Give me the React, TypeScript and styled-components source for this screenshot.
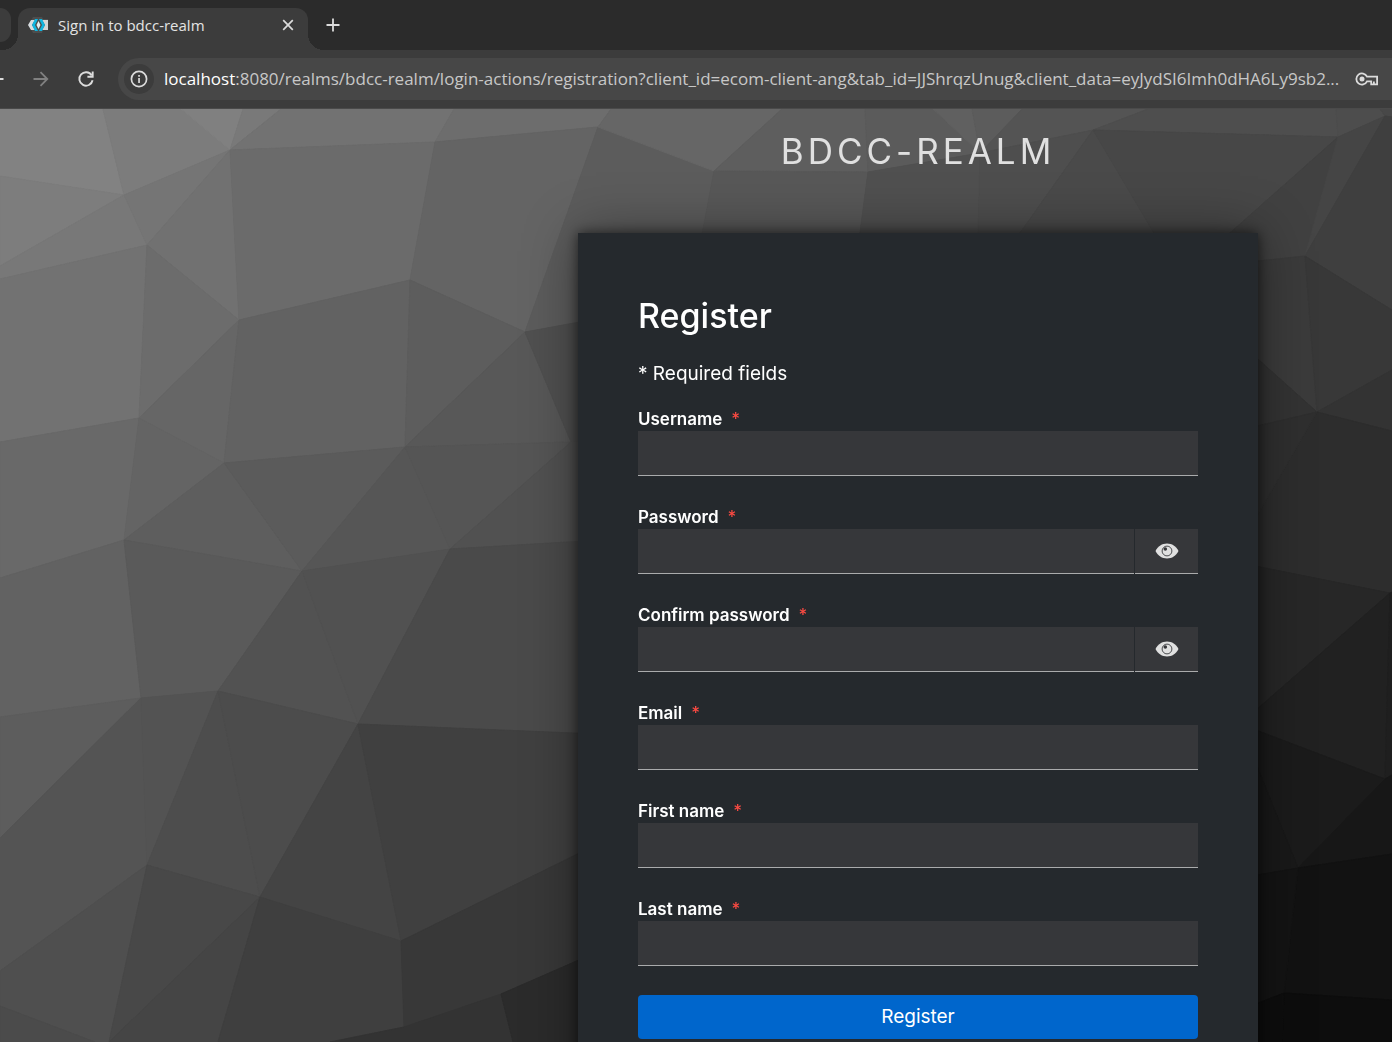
import React, { useState } from "react";
import styled, { createGlobalStyle, css } from "styled-components";

const GlobalStyle = createGlobalStyle`
  *, *::before, *::after { box-sizing: border-box; }
  html, body { margin: 0; background: #2b2b2b; }
  button, input { font: inherit; color: inherit; }
`;

const uiFont = `"Open Sans", "Noto Sans", sans-serif`;
const pageFont = `Inter, "Liberation Sans", sans-serif`;

const Shell = styled.div`
  display: flex;
  flex-direction: column;
  height: 100vh;
  overflow: hidden;
`;

/* ---------- browser chrome ---------- */

const TabStrip = styled.div`
  display: flex;
  align-items: flex-start;
  height: 50px;
  padding-top: 8px;
  background: #2b2b2b;
  color: #e3e3e3;
  font-family: ${uiFont};
`;

const PreviousTab = styled.div`
  flex: none;
  width: 11px;
  height: 34px;
  margin-right: 7px;
  background: #3c3c3c;
  border-radius: 0 12px 12px 0;
`;

const flare = css`
  content: "";
  position: absolute;
  bottom: 0;
  width: 16px;
  height: 16px;
`;

const ActiveTab = styled.div`
  position: relative;
  display: flex;
  flex: none;
  align-items: center;
  width: 290px;
  height: 42px;
  padding: 0 12px 8px 10px;
  background: #3c3c3c;
  border-radius: 12px 12px 0 0;

  &::before {
    ${flare}
    left: -16px;
    background: radial-gradient(circle at 0 0, transparent 16px, #3c3c3c 16px);
  }
  &::after {
    ${flare}
    right: -16px;
    background: radial-gradient(circle at 100% 0, transparent 16px, #3c3c3c 16px);
  }
`;

const TabTitle = styled.span`
  flex: 1;
  margin-left: 10px;
  font-size: 15px;
  line-height: 20px;
  white-space: nowrap;
`;

const IconButton = styled.button<{ $size: number }>`
  display: flex;
  flex: none;
  align-items: center;
  justify-content: center;
  width: ${(p) => p.$size}px;
  height: ${(p) => p.$size}px;
  padding: 0;
  border: 0;
  background: none;
  color: #dcdcdc;

  &:disabled { color: #808080; }
`;

const NewTabSlot = styled.div`
  margin: 4px 0 0 12px;
`;

const Toolbar = styled.div`
  display: flex;
  flex: none;
  align-items: center;
  height: 59px;
  overflow: hidden;
  background: #3c3c3c;
  border-bottom: 1px solid #4a4a4a;
`;

const NavButtons = styled.div`
  display: flex;
  flex: none;
  align-items: center;
  gap: 17px;
  margin-left: -18px;
  margin-right: 18px;
`;

const AddressBar = styled.div`
  display: flex;
  flex: 1;
  align-items: center;
  min-width: 0;
  height: 42px;
  padding: 0 12px 0 6px;
  background: #474747;
  border-radius: 21px 0 0 21px;
  color: #c7c7c7;
  font-family: ${uiFont};
  font-size: 17px;
  line-height: 24px;
`;

const SiteInfo = styled(IconButton)`
  margin-right: 10px;
  background: #3c3c3c;
  border-radius: 50%;
`;

const Address = styled.span`
  flex: 1;
  min-width: 0;
  overflow: hidden;
  white-space: nowrap;

  b { color: #ffffff; font-weight: 400; }
`;

/* ---------- sign-up page ---------- */

const Viewport = styled.div`
  display: grid;
  flex: 1;
  min-height: 0;
  overflow: hidden auto;
  scrollbar-width: none;
  background: #3c3c3c;
  color: #ffffff;
  font-family: ${pageFont};
`;

const Backdrop = styled.svg`
  position: sticky;
  top: 0;
  grid-area: 1 / 1;
  width: 100%;
  height: calc(100vh - 109px);
`;

const Column = styled.main`
  z-index: 1;
  grid-area: 1 / 1;
  justify-self: end;
  width: min(680px, 100%);
  margin-right: 134px;
`;

const Realm = styled.header`
  padding: 20px 0 60px;
  color: #e0e0e0;
  font-size: 35px;
  font-weight: 400;
  letter-spacing: 4px;
  line-height: 44px;
  text-align: center;
  text-transform: uppercase;
`;

const Card = styled.section`
  padding: 60px;
  background: #25292d;
  box-shadow: 0 0 50px rgba(3, 3, 3, 0.4), 0 0 12px rgba(3, 3, 3, 0.6);
`;

const Heading = styled.h1`
  margin: 0 0 19px;
  font-size: 34px;
  font-weight: 500;
  line-height: 46px;
`;

const Hint = styled.p`
  margin: 0 0 17px;
  font-size: 19px;
  line-height: 32px;
`;

const Form = styled.form`
  display: flex;
  flex-direction: column;
  gap: 29px;
`;

const Field = styled.div`
  display: flex;
  flex-direction: column;
`;

const Label = styled.label`
  height: 24px;
  font-size: 17px;
  font-weight: 600;
  line-height: 24px;
`;

const Star = styled.span`
  margin-left: 9px;
  color: #fa4a42;
  font-weight: 500;
`;

const InputGroup = styled.div`
  display: flex;
  gap: 1px;
`;

const control = css`
  height: 45px;
  border: 0;
  border-bottom: 1px solid #aaabac;
  border-radius: 0;
  background: #36373a;
  color: #e0e0e0;
`;

const Input = styled.input`
  ${control}
  flex: 1;
  min-width: 0;
  padding: 0 10px;
  font-size: 19px;
`;

const RevealButton = styled.button`
  ${control}
  display: flex;
  align-items: center;
  justify-content: center;
  width: 63px;
  padding: 0;
`;

const Submit = styled.button`
  height: 44px;
  padding: 0;
  border: 0;
  border-radius: 4px;
  background: #0066cc;
  color: #ffffff;
  font-size: 19px;
  line-height: 30px;
`;

/* ---------- drawings ---------- */

const facets: [string, string][] = [
  ["0,109 103,109 124,195 0,176", "#828282"],
  ["103,109 181,109 230,150 124,195", "#7c7c7c"],
  ["181,109 243,109 230,150", "#808080"],
  ["243,109 281,109 230,150", "#797979"],
  ["281,109 454,109 435,142 230,150", "#727272"],
  ["454,109 611,109 598,127 435,142", "#6d6d6d"],
  ["0,176 124,195 0,266", "#7d7d7d"],
  ["0,266 124,195 147,245 0,279", "#787878"],
  ["124,195 230,150 147,245", "#757575"],
  ["147,245 230,150 239,320", "#717171"],
  ["230,150 435,142 410,280 239,320", "#6b6b6b"],
  ["435,142 598,127 525,332 410,280", "#646464"],
  ["0,279 147,245 139,418 0,442", "#727272"],
  ["147,245 239,320 139,418", "#6c6c6c"],
  ["239,320 224,463 139,418", "#666666"],
  ["239,320 410,280 405,447 224,463", "#626262"],
  ["410,280 525,332 405,447", "#5d5d5d"],
  ["525,332 571,442 405,447", "#585858"],
  ["598,127 714,171 701,240 700,300 525,332", "#5c5c5c"],
  ["525,332 700,300 700,440 571,442", "#505050"],
  ["0,442 139,418 124,540 0,578", "#696969"],
  ["139,418 224,463 124,540", "#646464"],
  ["124,540 224,463 302,571", "#5e5e5e"],
  ["224,463 405,447 302,571", "#5b5b5b"],
  ["405,447 450,549 302,571", "#565656"],
  ["405,447 571,442 450,549", "#555555"],
  ["450,549 571,442 620,440 620,540 568,542", "#515151"],
  ["0,578 124,540 141,698 0,717", "#626262"],
  ["124,540 302,571 218,691 141,698", "#5a5a5a"],
  ["302,571 358,724 218,691", "#525252"],
  ["302,571 450,549 358,724", "#515151"],
  ["450,549 568,542 620,540 620,735 358,724", "#4a4a4a"],
  ["0,717 141,698 0,838", "#5d5d5d"],
  ["0,838 141,698 147,865 0,971", "#545454"],
  ["141,698 218,691 147,865", "#535353"],
  ["218,691 260,897 147,865", "#4d4d4d"],
  ["218,691 358,724 260,897", "#4c4c4c"],
  ["358,724 401,941 260,897", "#444444"],
  ["358,724 620,735 620,833 401,941", "#404040"],
  ["0,971 147,865 109,1042 95,1042 0,1006", "#4f4f4f"],
  ["147,865 260,897 109,1042", "#484848"],
  ["109,1042 260,897 218,1042", "#454545"],
  ["260,897 401,941 404,1027 330,1042 218,1042", "#3f3f3f"],
  ["401,941 620,833 620,942 501,994 404,1027", "#383838"],
  ["404,1027 501,994 513,1042 330,1042", "#333333"],
  ["501,994 620,942 620,1042 513,1042", "#2b2b2b"],
  ["0,1006 95,1042 0,1042", "#4b4b4b"],
  ["611,109 782,109 714,171 598,127", "#666666"],
  ["782,109 865,109 868,172 714,171", "#5e5e5e"],
  ["865,109 933,109 980,153 868,172", "#5b5b5b"],
  ["933,109 972,109 980,153", "#606060"],
  ["972,109 1022,109 990,148 980,153", "#5c5c5c"],
  ["1022,109 1148,109 1093,130 980,153", "#545454"],
  ["1148,109 1336,109 1338,137 1093,130", "#4e4e4e"],
  ["1336,109 1380,109 1385,116 1338,137", "#4d4d4d"],
  ["1380,109 1392,109 1392,117 1385,116", "#484848"],
  ["714,171 868,172 859,240 701,240", "#585858"],
  ["868,172 980,153 978,240 859,240", "#505050"],
  ["980,153 1093,130 1015,240 978,240", "#4e4e4e"],
  ["1093,130 1158,240 1015,240", "#4a4a4a"],
  ["1093,130 1338,137 1222,240 1158,240", "#474747"],
  ["1338,137 1305,256 1245,262 1222,240", "#414141"],
  ["1338,137 1385,116 1305,256", "#454545"],
  ["1385,116 1392,117 1392,310 1305,256", "#3f3f3f"],
  ["1240,263 1305,256 1317,412 1240,343", "#3b3b3b"],
  ["1240,343 1317,412 1240,430", "#333333"],
  ["1305,256 1392,310 1392,370 1317,412", "#383838"],
  ["1317,412 1392,370 1392,431", "#333333"],
  ["1317,412 1392,431 1392,592 1390,593 1240,563 1240,545", "#2d2d2d"],
  ["1317,412 1240,430 1240,545", "#2f2f2f"],
  ["1240,563 1390,593 1240,724", "#272727"],
  ["1240,724 1390,593 1385,779", "#212121"],
  ["1390,593 1392,592 1392,775 1385,779", "#1f1f1f"],
  ["1240,724 1385,779 1298,868", "#1b1b1b"],
  ["1240,724 1298,868 1240,878", "#191919"],
  ["1385,779 1392,775 1392,854 1298,868", "#171717"],
  ["1298,868 1392,854 1392,1000 1284,993", "#121212"],
  ["1240,878 1298,868 1284,993 1240,1010", "#141414"],
  ["1284,993 1392,1000 1392,1042 1282,1042", "#0d0d0d"],
  ["1240,1010 1284,993 1282,1042 1240,1042", "#0e0e0e"],
];

const PolygonBackdrop = () => (
  <Backdrop viewBox="0 109 1392 933" preserveAspectRatio="none" aria-hidden="true">
    {facets.map(([points, fill], i) => (
      <polygon key={i} points={points} fill={fill} stroke={fill} strokeWidth="1" strokeLinejoin="round" />
    ))}
  </Backdrop>
);

const KeycloakMark = () => (
  <svg width="20" height="18" viewBox="0 0 20 18" aria-hidden="true">
    <path d="M5 1h9l1 2h5v11h-5l-1 3H5L1 9z" fill="#4d4d4d" />
    <path d="M3 4h4L4 9l3 5H3L0 9z" fill="#d8dde0" />
    <path d="M14 4h6v10h-6l3-5z" fill="#d5d5d5" />
    <path d="M7 3h3L7 9l3 6H7L4 9z" fill="#10b5e0" />
    <path d="M11 3h3l3 6-3 6h-3l3-6z" fill="#10b5e0" />
    <path d="M10.500 5l2 4-2 4-2-4z" fill="#e4eef1" />
  </svg>
);

const CloseIcon = () => (
  <svg width="12" height="12" viewBox="0 0 12 12" fill="none" stroke="currentColor" strokeWidth="1.7" aria-hidden="true">
    <path d="M1.2 1.2l9.6 9.6M10.8 1.2l-9.6 9.6" />
  </svg>
);

const PlusIcon = () => (
  <svg width="14" height="14" viewBox="0 0 14 14" fill="none" stroke="currentColor" strokeWidth="1.8" aria-hidden="true">
    <path d="M7 .5v13M.5 7h13" />
  </svg>
);

const ArrowIcon = ({ back = false }: { back?: boolean }) => (
  <svg width="16" height="16" viewBox="0 0 16 16" fill="none" stroke="currentColor" strokeWidth="1.8" aria-hidden="true">
    <path d={back ? "M15.500 8H2M8.500 1.200L1.700 8l6.800 6.800" : "M.5 8H14M7.500 1.200L14.300 8l-6.800 6.800"} />
  </svg>
);

const ReloadIcon = () => (
  <svg width="18" height="18" viewBox="0 0 18 18" fill="none" stroke="currentColor" strokeWidth="1.9" aria-hidden="true">
    <path d="M14.700 5.400A6.700 6.700 0 1 0 15.600 10.300" />
    <path d="M15.700 1.500v5.300h-5.300" />
  </svg>
);

const InfoIcon = () => (
  <svg width="18" height="18" viewBox="0 0 18 18" aria-hidden="true">
    <circle cx="9" cy="9" r="7.600" fill="none" stroke="currentColor" strokeWidth="1.700" />
    <path d="M8.200 8h1.700v5H8.200zM8.200 5h1.700v1.700H8.200z" fill="currentColor" />
  </svg>
);

const KeyIcon = () => (
  <svg width="24" height="14" viewBox="0 0 24 14" fill="none" stroke="currentColor" strokeWidth="1.800" aria-hidden="true">
    <path d="M12 4.600A5.600 5.600 0 1 0 12 9.400h4.200v3h5.900V4.600z" />
    <path d="M18.900 12V9.400" />
    <circle cx="7" cy="7" r="2.500" fill="currentColor" stroke="none" />
  </svg>
);

const EyeIcon = () => (
  <svg width="24" height="16" viewBox="0 0 24 16" aria-hidden="true">
    <path d="M.5 8C3 3.200 7 .5 12 .5S21 3.200 23.500 8C21 12.800 17 15.500 12 15.500S3 12.800.5 8z" fill="#e0e0e0" />
    <circle cx="12" cy="8" r="4.900" fill="none" stroke="#4a4b4e" strokeWidth="1" />
    <circle cx="10.300" cy="6" r="1.800" fill="#36373a" />
  </svg>
);

/* ---------- composition ---------- */

type FieldSpec = { id: string; label: string; type: "text" | "email" | "password" };

const fields: FieldSpec[] = [
  { id: "username", label: "Username", type: "text" },
  { id: "password", label: "Password", type: "password" },
  { id: "password-confirm", label: "Confirm password", type: "password" },
  { id: "email", label: "Email", type: "email" },
  { id: "firstName", label: "First name", type: "text" },
  { id: "lastName", label: "Last name", type: "text" },
];

const FormField = ({ id, label, type }: FieldSpec) => {
  const [revealed, setRevealed] = useState(false);
  return (
    <Field>
      <Label htmlFor={id}>
        {label}
        <Star>*</Star>
      </Label>
      <InputGroup>
        <Input id={id} name={id} type={revealed ? "text" : type} required />
        {type === "password" && (
          <RevealButton
            type="button"
            aria-label={revealed ? "Hide password" : "Show password"}
            onClick={() => setRevealed(!revealed)}
          >
            <EyeIcon />
          </RevealButton>
        )}
      </InputGroup>
    </Field>
  );
};

export default function App() {
  return (
    <Shell>
      <GlobalStyle />
      <TabStrip>
        <PreviousTab />
        <ActiveTab>
          <KeycloakMark />
          <TabTitle>Sign in to bdcc-realm</TabTitle>
          <IconButton $size={16} aria-label="Close tab"><CloseIcon /></IconButton>
        </ActiveTab>
        <NewTabSlot>
          <IconButton $size={26} aria-label="New tab"><PlusIcon /></IconButton>
        </NewTabSlot>
      </TabStrip>
      <Toolbar>
        <NavButtons>
          <IconButton $size={28} aria-label="Back"><ArrowIcon back /></IconButton>
          <IconButton $size={28} aria-label="Forward" disabled><ArrowIcon /></IconButton>
          <IconButton $size={28} aria-label="Reload"><ReloadIcon /></IconButton>
        </NavButtons>
        <AddressBar>
          <SiteInfo $size={30} aria-label="Site information"><InfoIcon /></SiteInfo>
          <Address>
            <b>localhost</b>:8080/realms/bdcc-realm/login-actions/registration?client_id=ecom-client-ang&amp;tab_id=JJShrqzUnug&amp;client_data=eyJydSI6Imh0dHA6Ly9sb2...
          </Address>
          <IconButton $size={26} aria-label="Passwords"><KeyIcon /></IconButton>
        </AddressBar>
      </Toolbar>
      <Viewport>
        <PolygonBackdrop />
        <Column>
          <Realm>bdcc-realm</Realm>
          <Card>
            <Heading>Register</Heading>
            <Hint>* Required fields</Hint>
            <Form onSubmit={(e) => e.preventDefault()}>
              {fields.map((f) => (
                <FormField key={f.id} {...f} />
              ))}
              <Submit type="submit">Register</Submit>
            </Form>
          </Card>
        </Column>
      </Viewport>
    </Shell>
  );
}
